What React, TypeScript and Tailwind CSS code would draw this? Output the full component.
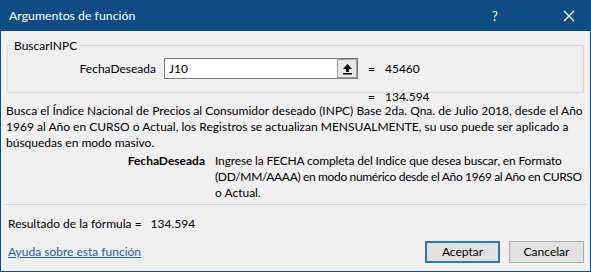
const font = { fontFamily: 'Lato, "Noto Sans", sans-serif' };

const ArrowButton = () => (
  <div className="flex h-[19px] w-[20px] items-center justify-center border border-[#a0a0a0] bg-[#e9e9e9]">
    <svg width="11" height="12" viewBox="0 0 11 12">
      <path d="M5.5 1 L10 6 L7 6 L7 9 L4 9 L4 6 L1 6 Z" fill="#000" />
      <rect x="1" y="10" width="9" height="1.5" fill="#000" />
    </svg>
  </div>
);

const App = () => {
  return (
    <div
      className="flex h-[272px] w-[591px] flex-col border border-[#0f4c84] bg-[#f0f0f0] text-[12px] leading-[16px] text-black"
      style={font}
    >
      <div className="flex h-[30px] shrink-0 items-center bg-[#0f4c84] pl-[8px] text-white">
        <div className="flex-1 text-[12.3px]">Argumentos de función</div>
        <div className="w-[30px] text-center text-[13px]">?</div>
        <div className="ml-[47px] mr-[9px] flex w-[24px] justify-center">
          <svg width="12" height="12" viewBox="0 0 12 12">
            <path d="M1 1 L11 11 M11 1 L1 11" stroke="#fff" strokeWidth="1.2" />
          </svg>
        </div>
      </div>

      <div className="flex flex-1 flex-col">
        <div className="relative mx-[6px] mt-[14px] h-[48px] shrink-0 rounded-[2px] border border-[#dcdcdc] border-r-[#e3d8c8]">
          <div className="absolute left-[5px] top-[-8px] bg-[#f0f0f0] px-[1px]">BuscarINPC</div>
          <div className="mt-[12px] flex items-center">
            <div className="w-[148px] shrink-0 text-right">FechaDeseada</div>
            <div className="ml-[8px] flex h-[21px] w-[194px] shrink-0 items-center border border-[#7a7a7a] bg-white pl-[4px]">
              <div className="flex-1">J10</div>
              <ArrowButton />
            </div>
            <div className="ml-[10px]">=</div>
            <div className="ml-[10px]">45460</div>
          </div>
        </div>

        <div className="mt-[-2px] flex h-[11px] items-center pl-[367px]">
          <span>=</span>
          <span className="ml-[10px]">134.594</span>
        </div>

        <div className="mt-[1px] pl-[5px]">
          <div className="whitespace-nowrap">Busca el Índice Nacional de Precios al Consumidor deseado (INPC) Base 2da. Qna. de Julio 2018, desde el Año</div>
          <div className="whitespace-nowrap">1969 al Año en CURSO o Actual, los Registros se actualizan MENSUALMENTE, su uso puede ser aplicado a</div>
          <div className="whitespace-nowrap">búsquedas en modo masivo.</div>
        </div>

        <div className="mt-[2px] flex">
          <div className="w-[204px] shrink-0 text-right font-bold">FechaDeseada</div>
          <div className="ml-[10px]">
            <div className="whitespace-nowrap tracking-[-0.15px]">Ingrese la FECHA completa del Indice que desea buscar, en Formato</div>
            <div className="whitespace-nowrap tracking-[-0.35px]">(DD/MM/AAAA) en modo numérico desde el Año 1969 al Año en CURSO</div>
            <div className="whitespace-nowrap">o Actual.</div>
          </div>
        </div>

        <div className="mx-[3px] mt-[3px] border-t border-[#dadada]" />

        <div className="mt-[11px] flex pl-[7px]">
          <span>Resultado de la fórmula =</span>
          <span className="ml-[9px]">134.594</span>
        </div>

        <div className="mt-[9px] flex items-center pl-[7px] pr-[6px]">
          <a className="flex-1 text-[#1f5fa6] underline" href="#">Ayuda sobre esta función</a>
          <button className="h-[22px] w-[75px] border-2 border-[#2f78b5] bg-[#e1e1e1]">Aceptar</button>
          <button className="ml-[9px] h-[22px] w-[75px] border border-[#adadad] bg-[#e1e1e1]">Cancelar</button>
        </div>
      </div>
    </div>
  );
};

export default App;
